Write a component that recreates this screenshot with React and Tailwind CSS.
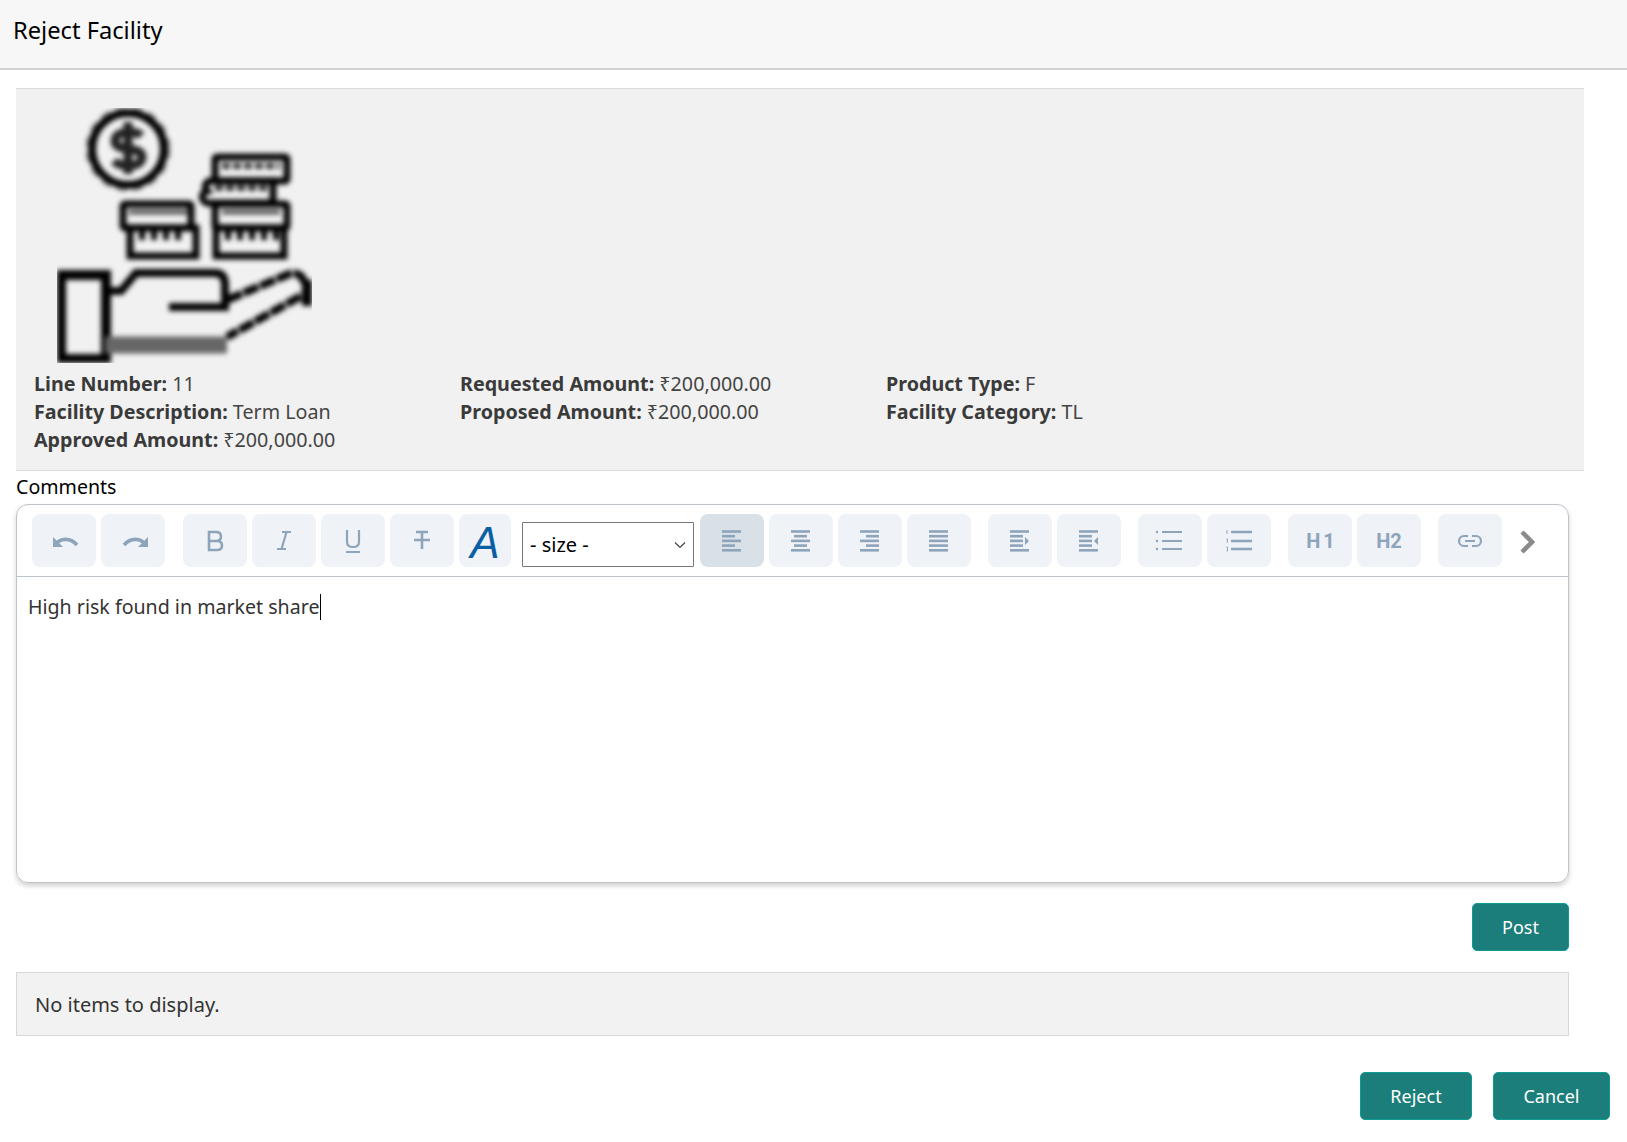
import React from 'react';

const FONT = 'font-["Noto_Sans",sans-serif]';

const Glyph = ({ children, strokeWidth = 2 }) => (
    <svg width="34" height="34" viewBox="0 0 34 34" fill="none" stroke="#8ea4bb" strokeWidth={strokeWidth} className="shrink-0 blur-[0.5px]">
        {children}
    </svg>
);

const ToolButton = ({ children, active, className = 'w-[64px]' }) => (
    <div className={`flex h-[53px] shrink-0 items-center justify-center rounded-lg ${className} ${active ? 'bg-[#d9e1e8]' : 'bg-[#eff2f7]'}`}>
        {children}
    </div>
);

const AlignIcon = ({ rows, marker }) => (
    <Glyph strokeWidth={2.6}>
        {rows.map(([x1, x2], i) => (
            <line key={i} x1={x1} x2={x2} y1={7.5 + i * 4.7} y2={7.5 + i * 4.7} />
        ))}
        {marker}
    </Glyph>
);

const FacilityIcon = () => (
    <div className="h-[255px] w-[255px] overflow-hidden">
        <svg width="255" height="255" viewBox="0 0 255 255" fill="none" stroke="#000" strokeWidth="7" className="blur-[2.6px]">
            {/* coin */}
            <circle cx="71" cy="41" r="40" strokeWidth="5" stroke="#888" strokeDasharray="10 6" />
            <circle cx="71" cy="41" r="36" strokeWidth="8" />
            <path d="M84 28c-5-6-26-6-26 5 0 12 27 4 27 16 0 11-21 11-28 4M71 14v52" strokeWidth="9" stroke="#222" />
            {/* right stack */}
            <rect x="158" y="49" width="72" height="24" rx="2" fill="#f1f1f1" />
            <path d="M165 58h58" strokeWidth="6" strokeDasharray="8 3" stroke="#333" />
            <path d="M156 73h-3a6 6 0 0 0-3 10 6 6 0 0 0 3 12h63V73z" fill="#f1f1f1" />
            <path d="M158 80h52" strokeWidth="6" strokeDasharray="8 3" stroke="#333" />
            <rect x="158" y="96" width="72" height="24" rx="2" fill="#f1f1f1" />
            <path d="M165 104h58" strokeWidth="5" stroke="#555" />
            <rect x="159" y="120" width="68" height="28" fill="#f1f1f1" />
            <path d="M171 122v10M183 122v10M195 122v10M207 122v10M219 122v10" strokeWidth="6" />
            {/* left stack */}
            <rect x="66" y="96" width="68" height="24" rx="2" fill="#f1f1f1" />
            <path d="M72 104h58" strokeWidth="5" stroke="#555" />
            <rect x="73" y="120" width="66" height="28" fill="#f1f1f1" />
            <path d="M85 122v10M97 122v10M109 122v10M121 122v10" strokeWidth="6" />
            {/* hand */}
            <rect x="4" y="167" width="45" height="84" strokeWidth="10" />
            <path d="M48 183h16l15-18h79q10 0 10 12v22h-56" strokeWidth="8" />
            <path d="M170 192l62-26q6-2 12 2l9 15-83 46" strokeDasharray="16 2" strokeWidth="8" />
            <path d="M48 237h122" strokeWidth="17" stroke="#666" />
            <path d="M250 172v26" strokeWidth="10" />
        </svg>
    </div>
);

const Field = ({ label, value }) => (
    <div>
        <span className="font-bold text-[#3a3a3a]">{label}:</span> {value}
    </div>
);

const TealButton = ({ children, className }) => (
    <button className={`h-[48px] rounded-[5px] border border-[#0f9c92] bg-[#1b7e7a] text-[18px] text-white ${className}`}>
        {children}
    </button>
);

const App = () => {
    return (
        <div className={`h-[1142px] w-full overflow-hidden bg-white text-[#333] ${FONT}`}>
            <header className="flex h-[70px] items-center border-b-2 border-[#d2d2d2] bg-[#f7f7f7] pb-[7px] pl-[13px] text-[23.7px] leading-none text-black">
                Reject Facility
            </header>

            <main className="pl-4 pt-[18px]">
                {/* Facility summary */}
                <section className="h-[383px] w-[1568px] border-y border-[#dcdcdc] bg-[#f1f1f1] pl-[18px] pt-[19px]">
                    <div className="pl-[23px]">
                        <FacilityIcon />
                    </div>
                    <div className="mt-[7px] grid w-[1278px] grid-cols-3 text-[19.7px] leading-[28px] text-[#444]">
                        <div>
                            <Field label="Line Number" value="11" />
                            <Field label="Facility Description" value="Term Loan" />
                            <Field label="Approved Amount" value="₹200,000.00" />
                        </div>
                        <div>
                            <Field label="Requested Amount" value="₹200,000.00" />
                            <Field label="Proposed Amount" value="₹200,000.00" />
                        </div>
                        <div>
                            <Field label="Product Type" value="F" />
                            <Field label="Facility Category" value="TL" />
                        </div>
                    </div>
                </section>

                <div className="mt-[2px] h-[31px] text-[19.6px] leading-[28px] text-black">Comments</div>

                {/* Editor */}
                <section className="h-[379px] w-[1553px] rounded-xl border border-[#bcc3c9] shadow-[0_3px_5px_rgba(0,0,0,0.18)]">
                    <div className="flex h-[72px] items-start border-b border-[#bcc3c9] pl-[15px] pt-[9px]">
                        <div className="flex gap-[5px]">
                            <ToolButton>
                                <Glyph strokeWidth={3.6}>
                                    <path d="M8 21c5-7 15-8 22 0" />
                                    <path d="M6 13v10h10z" fill="#8ea4bb" stroke="none" />
                                </Glyph>
                            </ToolButton>
                            <ToolButton>
                                <Glyph strokeWidth={3.6}>
                                    <path d="M30 21c-5-7-15-8-22 0" />
                                    <path d="M32 13v10H22z" fill="#8ea4bb" stroke="none" />
                                </Glyph>
                            </ToolButton>
                        </div>
                        <div className="ml-[18px] flex gap-[5px]">
                            <ToolButton>
                                <Glyph strokeWidth={2.6}>
                                    <path d="M11 8h7q5 0 5 4.500t-5 4.500h-7zM11 17h8q5 0 5 4.500T19 26h-8z" />
                                </Glyph>
                            </ToolButton>
                            <ToolButton>
                                <Glyph strokeWidth={2.2}>
                                    <path d="M15 8h9M10 25h9M19.500 8l-5 17" />
                                </Glyph>
                            </ToolButton>
                            <ToolButton>
                                <Glyph strokeWidth={2.2}>
                                    <path d="M11 6v12q0 5 6 5t6-5V6M10 28h14" />
                                </Glyph>
                            </ToolButton>
                            <ToolButton>
                                <Glyph strokeWidth={2.6}>
                                    <path d="M11 8h12M9 16h16M17 8v17" />
                                </Glyph>
                            </ToolButton>
                            <ToolButton className="w-[52px]">
                                <span className='pt-1 font-["Liberation_Sans",sans-serif] text-[44px] italic leading-none text-[#0b5fa5]'>A</span>
                            </ToolButton>
                        </div>
                        <div className="ml-[11px] mt-2 flex h-[45px] w-[172px] shrink-0 items-center justify-between rounded-[1px] border border-[#767676] bg-white px-[7px] text-[20px] text-black">
                            <span>- size -</span>
                            <svg width="12" height="8" viewBox="0 0 12 8" fill="none" stroke="#444" strokeWidth="1.200">
                                <path d="M1 1.500l5 5 5-5" />
                            </svg>
                        </div>
                        <div className="ml-[6px] flex gap-[5px]">
                            <ToolButton active>
                                <AlignIcon rows={[[7, 26], [7, 20], [7, 26], [7, 20], [7, 26]]} />
                            </ToolButton>
                            <ToolButton>
                                <AlignIcon rows={[[7, 26], [10, 23], [7, 26], [10, 23], [7, 26]]} />
                            </ToolButton>
                            <ToolButton>
                                <AlignIcon rows={[[7, 26], [13, 26], [7, 26], [13, 26], [7, 26]]} />
                            </ToolButton>
                            <ToolButton>
                                <AlignIcon rows={[[7, 26], [7, 26], [7, 26], [7, 26], [7, 26]]} />
                            </ToolButton>
                        </div>
                        <div className="ml-[17px] flex gap-[5px]">
                            <ToolButton>
                                <AlignIcon
                                    rows={[[7, 26], [7, 20], [7, 20], [7, 20], [7, 26]]}
                                    marker={<path d="M22 13v8l4-4z" fill="#8ea4bb" stroke="none" />}
                                />
                            </ToolButton>
                            <ToolButton>
                                <AlignIcon
                                    rows={[[7, 26], [7, 20], [7, 20], [7, 20], [7, 26]]}
                                    marker={<path d="M26 13v8l-4-4z" fill="#8ea4bb" stroke="none" />}
                                />
                            </ToolButton>
                        </div>
                        <div className="ml-[17px] flex gap-[5px]">
                            <ToolButton>
                                <Glyph>
                                    <circle cx="4" cy="8" r="1.200" fill="#8ea4bb" stroke="none" />
                                    <circle cx="4" cy="17" r="1.200" fill="#8ea4bb" stroke="none" />
                                    <circle cx="4" cy="25" r="1.200" fill="#8ea4bb" stroke="none" />
                                    <path d="M9 8h20M9 17h20M9 25h20" />
                                </Glyph>
                            </ToolButton>
                            <ToolButton>
                                <Glyph>
                                    <path d="M5 6v4M4.500 15h1v3h-1M4.500 23h1v4h-1" strokeWidth="1" />
                                    <path d="M9 8h21M9 17h21M9 25h21" strokeWidth="2.400" />
                                </Glyph>
                            </ToolButton>
                        </div>
                        <div className="ml-[17px] flex gap-[5px]">
                            <ToolButton>
                                <span className="pl-1 font-['Roboto',sans-serif] text-[20px] font-bold tracking-[3px] text-[#8ea4bb]">H1</span>
                            </ToolButton>
                            <ToolButton>
                                <span className="font-['Roboto',sans-serif] text-[20px] font-bold text-[#8ea4bb]">H2</span>
                            </ToolButton>
                        </div>
                        <ToolButton className="ml-[17px] w-[64px]">
                            <Glyph strokeWidth={2.2}>
                                <path d="M15 12h-4a5 5 0 0 0 0 10h4M19 12h4a5 5 0 0 1 0 10h-4M12 17h10" />
                            </Glyph>
                        </ToolButton>
                        <svg width="16" height="24" viewBox="0 0 16 24" fill="none" stroke="#8a8a8a" strokeWidth="4.500" className="ml-[17px] mt-[16px] shrink-0">
                            <path d="M3 2l10 10L3 22" />
                        </svg>
                    </div>
                    <div className="pl-[11px] pt-[11px] text-[19.6px] leading-[28px] text-[#333]">
                        High risk found in market share<span className="ml-[1px] inline-block h-[26px] w-px translate-y-[6px] bg-black" />
                    </div>
                </section>

                <div className="mt-5 flex w-[1553px] justify-end">
                    <TealButton className="w-[97px]">Post</TealButton>
                </div>

                <div className="mt-[21px] flex h-[64px] w-[1553px] items-center border border-[#d8d8d8] bg-[#f2f2f2] pl-[18px] pt-[2px] text-[20px] text-[#333]">
                    No items to display.
                </div>

                <div className="mt-9 flex w-[1594px] justify-end gap-[21px]">
                    <TealButton className="w-[112px]">Reject</TealButton>
                    <TealButton className="w-[117px]">Cancel</TealButton>
                </div>
            </main>
        </div>
    );
};

export default App;
